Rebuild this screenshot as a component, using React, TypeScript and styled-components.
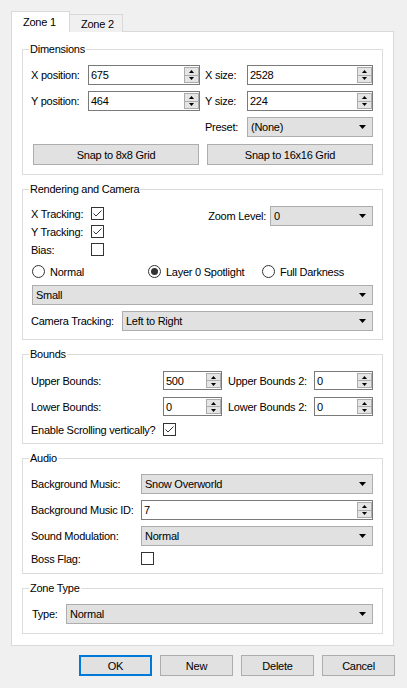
import React from "react";
import styled, { createGlobalStyle } from "styled-components";

const FONT = `"Liberation Sans", Arial, sans-serif`;

const Global = createGlobalStyle`
  html, body { margin: 0; padding: 0; background: #f0f0f0; }
  body { font-family: ${FONT}; font-size: 11px; letter-spacing: -0.25px; color: #000; }
  * { box-sizing: border-box; }
`;

const Window = styled.div`
  width: 407px;
  height: 688px;
  background: #f0f0f0;
  padding: 11px 12px 0 11px;
  display: flex;
  flex-direction: column;
  align-items: flex-start;
`;

const TabStrip = styled.div`
  display: flex;
  align-items: flex-end;
  height: 21px;
  margin-bottom: -1px;
  position: relative;
  z-index: 1;
`;

const Tab = styled.div<{ $active?: boolean }>`
  height: ${(p) => (p.$active ? 21 : 18)}px;
  width: ${(p) => (p.$active ? 59 : 54)}px;
  margin-left: ${(p) => (p.$active ? 0 : -1)}px;
  padding-left: 11px;
  display: flex;
  align-items: center;
  border: 1px solid #d9d9d9;
  border-bottom: none;
  background: ${(p) => (p.$active ? "#fff" : "#f0f0f0")};
  padding-top: ${(p) => (p.$active ? 0 : 1)}px;
`;

const Panel = styled.div`
  width: 383px;
  height: 615px;
  background: #fff;
  border: 1px solid #d9d9d9;
  padding: 17px 10px 11px 10px;
  display: flex;
  flex-direction: column;
  gap: 14px;
`;

const Group = styled.div<{ $pt: number; $pb: number }>`
  position: relative;
  border: 1px solid #dcdcdc;
  padding: ${(p) => p.$pt}px 9px ${(p) => p.$pb}px 8px;
`;

const GroupTitle = styled.span`
  position: absolute;
  top: -8px;
  left: 6px;
  padding: 0 1px;
  background: #fff;
  line-height: 14px;
`;

const Grid = styled.div<{ $cols: string; $gap: number }>`
  display: grid;
  grid-template-columns: ${(p) => p.$cols};
  row-gap: ${(p) => p.$gap}px;
  align-items: center;
`;

const Label = styled.span<{ $pl?: number }>`
  padding-left: ${(p) => p.$pl ?? 0}px;
  white-space: nowrap;
`;

const NumBox = styled.div<{ $h: number }>`
  height: ${(p) => p.$h}px;
  border: 1px solid #7a7a7a;
  background: #fff;
  display: flex;
  align-items: center;
  padding-left: 2px;
`;

const NumText = styled.span`
  flex: 1;
`;

const Spin = styled.div`
  width: 15px;
  align-self: stretch;
  margin: 1px 0 1px 0;
  display: flex;
  flex-direction: column;
`;

const SpinHalf = styled.div<{ $down?: boolean }>`
  flex: 1;
  border: 1px solid #acacac;
  background: #e5e5e5;
  margin-top: ${(p) => (p.$down ? -1 : 0)}px;
  display: flex;
  align-items: center;
  justify-content: center;
`;

const ComboBox = styled.div<{ $w?: number }>`
  height: 20px;
  width: ${(p) => (p.$w ? `${p.$w}px` : "auto")};
  border: 1px solid #adadad;
  background: #e1e1e1;
  display: flex;
  align-items: center;
  padding: 0 6px 0 3px;
`;

const ComboText = styled.span`
  flex: 1;
`;

const Button = styled.div<{ $w: number; $primary?: boolean }>`
  width: ${(p) => p.$w}px;
  height: 21px;
  border: ${(p) => (p.$primary ? "2px solid #0078d7" : "1px solid #adadad")};
  background: #e1e1e1;
  display: flex;
  align-items: center;
  justify-content: center;
`;

const ButtonRow = styled.div<{ $mt: number; $gap: number; $pl?: number }>`
  display: flex;
  gap: ${(p) => p.$gap}px;
  margin-top: ${(p) => p.$mt}px;
  padding-left: ${(p) => p.$pl ?? 0}px;
`;

const Footer = styled.div`
  align-self: stretch;
  display: flex;
  justify-content: flex-end;
  gap: 8px;
  margin-top: 9px;
`;

const CheckBoxBox = styled.div`
  width: 13px;
  height: 13px;
  border: 1px solid #333;
  background: #fff;
  display: flex;
  align-items: center;
  justify-content: center;
`;

const RadioCircle = styled.div`
  width: 13px;
  height: 13px;
  border: 1px solid #333;
  border-radius: 50%;
  background: #fff;
  display: flex;
  align-items: center;
  justify-content: center;
`;

const RadioDot = styled.div`
  width: 7px;
  height: 7px;
  border-radius: 50%;
  background: #333;
`;

const RadioItem = styled.div`
  display: flex;
  align-items: center;
  gap: 5px;
`;

const RadioRow = styled.div`
  display: grid;
  grid-template-columns: 116px 114px auto;
  padding-left: 1px;
  margin-top: 9px;
  height: 13px;
  align-items: center;
`;

const TopPart = styled.div`
  display: flex;
  justify-content: space-between;
  align-items: flex-start;
`;

const CheckColumn = styled.div`
  display: flex;
  flex-direction: column;
  gap: 5px;
  padding-top: 1px;
`;

const CheckRow = styled.div<{ $lw: number; $mt?: number }>`
  display: grid;
  grid-template-columns: ${(p) => p.$lw}px 13px;
  align-items: center;
  height: 13px;
  margin-top: ${(p) => p.$mt ?? 0}px;
`;

const FieldRow = styled.div<{ $mt: number; $lw: number; $pl?: number }>`
  display: grid;
  grid-template-columns: ${(p) => p.$lw}px 1fr;
  align-items: center;
  margin-top: ${(p) => p.$mt}px;
  padding-left: ${(p) => p.$pl ?? 0}px;
`;

const ZoomRow = styled.div`
  display: flex;
  align-items: center;
  gap: 4px;
`;

const Arrow = () => (
  <svg width="7" height="4" viewBox="0 0 7 4">
    <polygon points="0,0 7,0 3.5,4" fill="#000" />
  </svg>
);

const SpinArrow = ({ down }: { down?: boolean }) => (
  <svg width="5" height="3" viewBox="0 0 5 3">
    <polygon points={down ? "0,0 5,0 2.5,3" : "0,3 5,3 2.5,0"} fill="#000" />
  </svg>
);

const Num = ({ value, h = 20 }: { value: string; h?: number }) => (
  <NumBox $h={h}>
    <NumText>{value}</NumText>
    <Spin>
      <SpinHalf>
        <SpinArrow />
      </SpinHalf>
      <SpinHalf $down>
        <SpinArrow down />
      </SpinHalf>
    </Spin>
  </NumBox>
);

const Combo = ({ value, w }: { value: string; w?: number }) => (
  <ComboBox $w={w}>
    <ComboText>{value}</ComboText>
    <Arrow />
  </ComboBox>
);

const Check = ({ checked }: { checked?: boolean }) => (
  <CheckBoxBox>
    {checked && (
      <svg width="11" height="11" viewBox="0 0 11 11">
        <polyline points="1.5,5.5 4,8 9.5,2.5" fill="none" stroke="#333" strokeWidth="1" />
      </svg>
    )}
  </CheckBoxBox>
);

const Radio = ({ checked, label }: { checked?: boolean; label: string }) => (
  <RadioItem>
    <RadioCircle>{checked && <RadioDot />}</RadioCircle>
    <span>{label}</span>
  </RadioItem>
);

export default function App() {
  return (
    <>
      <Global />
      <Window>
        <TabStrip>
          <Tab $active>Zone 1</Tab>
          <Tab>Zone 2</Tab>
        </TabStrip>
        <Panel>
          <Group $pt={15} $pb={9}>
            <GroupTitle>Dimensions</GroupTitle>
            <Grid $cols="57px 112px 47px 126px" $gap={6}>
              <Label>X position:</Label>
              <Num value="675" />
              <Label $pl={5}>X size:</Label>
              <Num value="2528" />
              <Label>Y position:</Label>
              <Num value="464" />
              <Label $pl={5}>Y size:</Label>
              <Num value="224" />
              <span />
              <span />
              <Label $pl={5}>Preset:</Label>
              <Combo value="(None)" />
            </Grid>
            <ButtonRow $mt={7} $gap={8} $pl={2}>
              <Button $w={166}>Snap to 8x8 Grid</Button>
              <Button $w={166}>Snap to 16x16 Grid</Button>
            </ButtonRow>
          </Group>

          <Group $pt={16} $pb={8}>
            <GroupTitle>Rendering and Camera</GroupTitle>
            <TopPart>
              <CheckColumn>
                <CheckRow $lw={60}>
                  <Label>X Tracking:</Label>
                  <Check checked />
                </CheckRow>
                <CheckRow $lw={60}>
                  <Label>Y Tracking:</Label>
                  <Check checked />
                </CheckRow>
                <CheckRow $lw={60}>
                  <Label>Bias:</Label>
                  <Check />
                </CheckRow>
              </CheckColumn>
              <ZoomRow>
                <Label>Zoom Level:</Label>
                <Combo value="0" w={103} />
              </ZoomRow>
            </TopPart>
            <RadioRow>
              <Radio label="Normal" />
              <Radio label="Layer 0 Spotlight" checked />
              <Radio label="Full Darkness" />
            </RadioRow>
            <FieldRow $mt={7} $lw={0} $pl={1}>
              <span />
              <Combo value="Small" />
            </FieldRow>
            <FieldRow $mt={6} $lw={91}>
              <Label>Camera Tracking:</Label>
              <Combo value="Left to Right" />
            </FieldRow>
          </Group>

          <Group $pt={16} $pb={7}>
            <GroupTitle>Bounds</GroupTitle>
            <Grid $cols="132px 59px 92px 59px" $gap={7}>
              <Label>Upper Bounds:</Label>
              <Num value="500" h={19} />
              <Label $pl={6}>Upper Bounds 2:</Label>
              <Num value="0" h={19} />
              <Label>Lower Bounds:</Label>
              <Num value="0" h={19} />
              <Label $pl={6}>Lower Bounds 2:</Label>
              <Num value="0" h={19} />
            </Grid>
            <CheckRow $lw={132} $mt={7}>
              <Label>Enable Scrolling vertically?</Label>
              <Check checked />
            </CheckRow>
          </Group>

          <Group $pt={15} $pb={8}>
            <GroupTitle>Audio</GroupTitle>
            <Grid $cols="110px 232px" $gap={6}>
              <Label>Background Music:</Label>
              <Combo value="Snow Overworld" />
              <Label>Background Music ID:</Label>
              <Num value="7" />
              <Label>Sound Modulation:</Label>
              <Combo value="Normal" />
              <Label>Boss Flag:</Label>
              <Check />
            </Grid>
          </Group>

          <Group $pt={15} $pb={9}>
            <GroupTitle>Zone Type</GroupTitle>
            <FieldRow $mt={0} $lw={35}>
              <Label $pl={1}>Type:</Label>
              <Combo value="Normal" />
            </FieldRow>
          </Group>
        </Panel>
        <Footer>
          <Button $w={73} $primary>OK</Button>
          <Button $w={73}>New</Button>
          <Button $w={73}>Delete</Button>
          <Button $w={73}>Cancel</Button>
        </Footer>
      </Window>
    </>
  );
}
